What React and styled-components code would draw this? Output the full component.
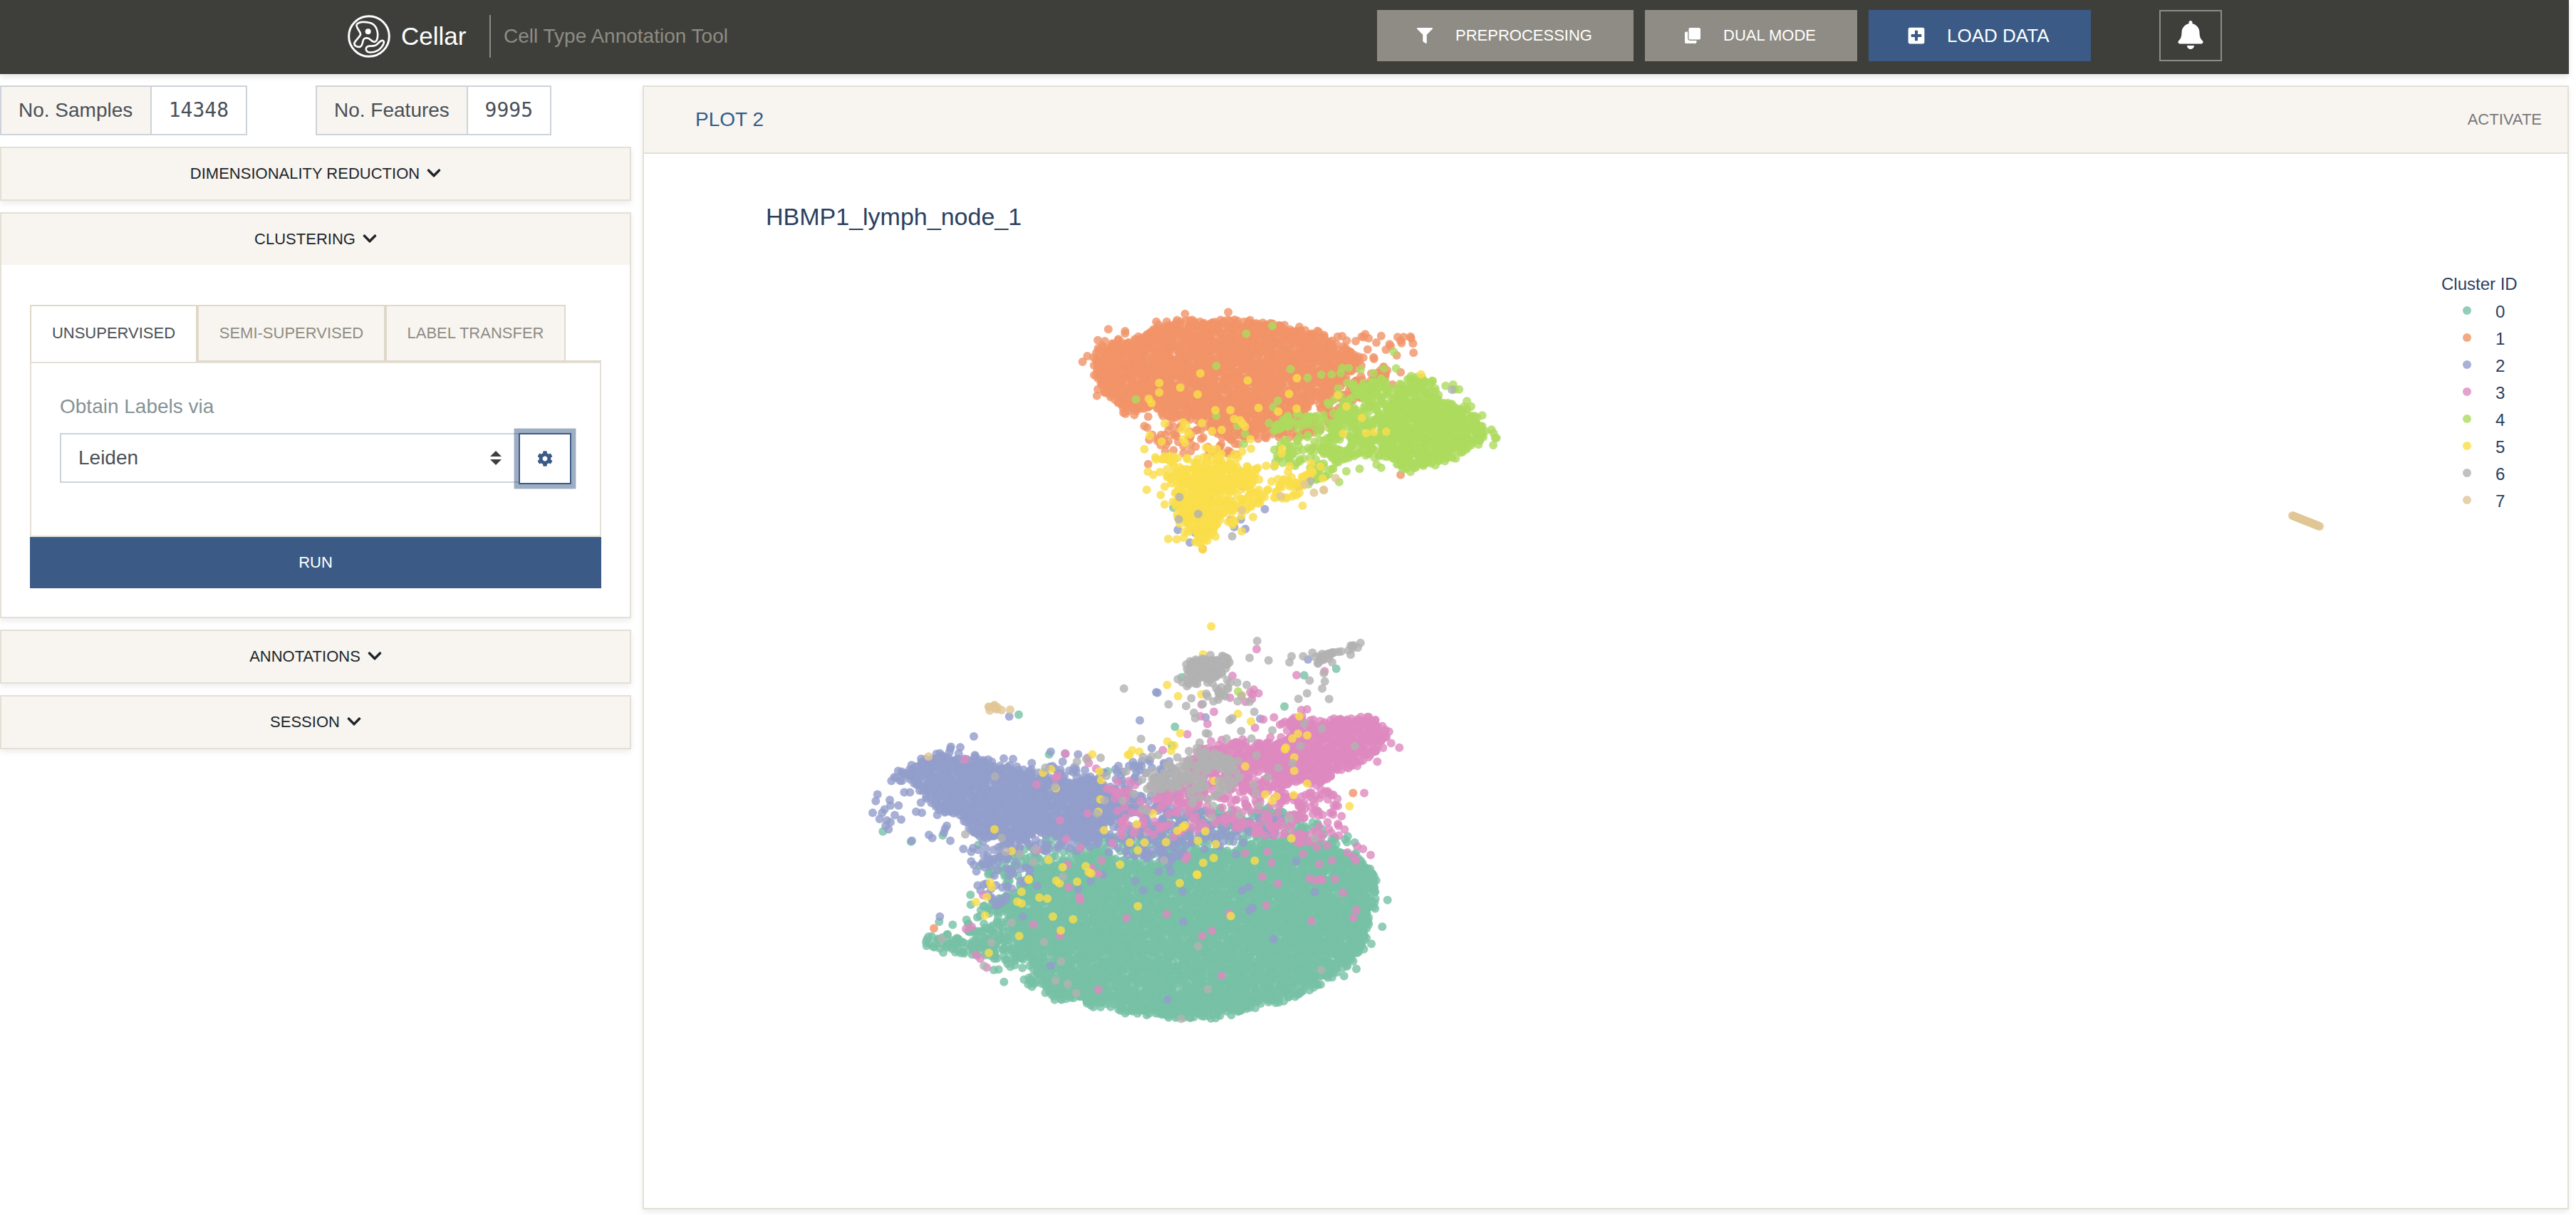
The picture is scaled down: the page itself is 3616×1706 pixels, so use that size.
import React from "react";
import styled, { createGlobalStyle } from "styled-components";
import {
  FaBell,
  FaChevronDown,
  FaClone,
  FaCog,
  FaFilter,
  FaPlusSquare,
} from "react-icons/fa";

const GlobalStyle = createGlobalStyle`
  * { box-sizing: border-box; }
  body {
    margin: 0;
    background: #fff;
    font-family: "Liberation Sans", Arial, sans-serif;
    font-size: 28px;
    line-height: 1.5;
    color: #3e3f3a;
  }
`;

/* ---------- palette ---------- */

const ink = "#212529";
const blue = "#3b5b86";
const sand = "#f8f5f0";
const cardLine = "#e4e0d6";
const tabLine = "#dfd9ca";
const inputLine = "#cdd3da";
const plotInk = "#2a3f5f";

/* ---------- page ---------- */

const Page = styled.div`
  width: 3606px;
  height: 1706px;
  overflow: visible;
`;

const Navbar = styled.header`
  display: flex;
  align-items: flex-start;
  height: 104px;
  padding: 14px 0 0 488px;
  background: #3e3f3a;
  box-shadow: 0 4px 8px rgba(0, 0, 0, 0.1);
`;

const Brand = styled.div`
  display: flex;
  align-items: center;
  width: 1445px;
  height: 60px;
  margin-top: 7px;
`;

const BrandName = styled.span`
  width: 124px;
  margin-left: 15px;
  font-size: 35px;
  line-height: 60px;
  color: #fff;
  white-space: nowrap;
`;

const Tagline = styled.span`
  height: 60px;
  padding-left: 18px;
  border-left: 2px solid #8e8c84;
  line-height: 60px;
  color: #8e8c84;
  white-space: nowrap;
`;

const NavActions = styled.div`
  display: flex;
  gap: 16px;
`;

const NavButton = styled.button`
  display: flex;
  align-items: center;
  width: ${(p) => p.$width}px;
  height: 72px;
  padding: 0 0 0 ${(p) => p.$pad}px;
  border: 0;
  background: ${(p) => (p.$primary ? blue : "#8e8c84")};
  color: #fff;
  font-family: inherit;
  font-size: ${(p) => (p.$primary ? 26 : 22)}px;
  white-space: nowrap;

  svg {
    width: ${(p) => p.$icon}px;
    height: ${(p) => p.$icon}px;
    margin-right: ${(p) => p.$gap}px;
  }
`;

const BellButton = styled.button`
  display: flex;
  align-items: center;
  justify-content: center;
  width: 88px;
  height: 72px;
  margin-left: 80px;
  padding: 0 0 3px;
  border: 2px solid #8e8c84;
  background: transparent;
  color: #fff;
`;

const Body = styled.main`
  display: flex;
  gap: 16px;
  padding-top: 16px;
`;

/* ---------- sidebar ---------- */

const Sidebar = styled.aside`
  display: flex;
  flex-direction: column;
  gap: 16px;
  width: 886px;
`;

const Stats = styled.div`
  display: flex;
  gap: 96px;
  height: 70px;
`;

const Stat = styled.div`
  display: flex;
  width: ${(p) => p.$width}px;
  border: 2px solid ${inputLine};
  line-height: 66px;
  color: #495057;
`;

const StatLabel = styled.span`
  flex: 1;
  padding-left: 24px;
  border-right: 2px solid ${inputLine};
  background: ${sand};
  white-space: nowrap;
`;

const StatValue = styled.span`
  padding: 0 24px;
  font-family: "DejaVu Sans Mono", monospace;
`;

const Panel = styled.section`
  border: 2px solid ${cardLine};
  background: #fff;
  box-shadow: 0 4px 8px rgba(0, 0, 0, 0.075);
`;

const PanelHeader = styled.div`
  display: flex;
  align-items: center;
  justify-content: center;
  gap: 10px;
  height: 72px;
  padding-bottom: 2px;
  background: ${sand};
  font-size: 22px;
  color: ${ink};

  svg {
    width: 20px;
    height: 22px;
  }
`;

const PanelBody = styled.div`
  padding: 56px 40px 40px;
`;

const Tabs = styled.div`
  display: flex;
  height: 80px;
  border-bottom: 2px solid ${tabLine};
`;

const Tab = styled.div`
  display: flex;
  align-items: center;
  justify-content: center;
  width: ${(p) => p.$width}px;
  height: ${(p) => (p.$active ? 80 : 78)}px;
  padding-bottom: ${(p) => (p.$active ? 3 : 1)}px;
  border: 2px solid ${tabLine};
  border-bottom: 0;
  background: ${(p) => (p.$active ? "#fff" : sand)};
  font-size: 22px;
  color: ${(p) => (p.$active ? "#495057" : "#8e8c84")};
  white-space: nowrap;
`;

const TabPane = styled.div`
  height: 246px;
  padding: 40px 40px 0;
  border: 2px solid ${cardLine};
`;

const FieldLabel = styled.div`
  height: 42px;
  margin-bottom: 16px;
  color: #869296;
`;

const FieldRow = styled.div`
  display: flex;
  align-items: flex-start;
`;

const Select = styled.div`
  display: flex;
  align-items: center;
  justify-content: space-between;
  width: 646px;
  height: 70px;
  padding: 0 26px 0 24px;
  border: 2px solid ${inputLine};
  border-right: 0;
  color: #495057;
`;

const GearButton = styled.button`
  display: flex;
  align-items: center;
  justify-content: center;
  width: 74px;
  height: 72px;
  margin-left: -2px;
  padding: 0;
  border: 2px solid ${blue};
  background: #fff;
  color: ${blue};
  box-shadow: 0 0 0 6.4px rgba(59, 91, 134, 0.5);
`;

const RunButton = styled.button`
  display: block;
  width: 100%;
  height: 72px;
  border: 0;
  background: ${blue};
  color: #fff;
  font-family: inherit;
  font-size: 22px;
`;

/* ---------- plot card ---------- */

const PlotCard = styled(Panel)`
  width: 2704px;
  height: 1578px;
`;

const PlotHeader = styled.div`
  display: flex;
  align-items: center;
  justify-content: space-between;
  height: 94px;
  padding: 0 36px 1px 72px;
  border-bottom: 2px solid ${cardLine};
  background: ${sand};
`;

const PlotName = styled.span`
  color: #325d88;
`;

const Activate = styled.span`
  font-size: 22px;
  color: #77777a;
`;

const Chart = styled.svg`
  display: block;
  width: 2700px;
  height: 1478px;
  font-family: "Liberation Sans", Arial, sans-serif;
`;

/* ---------- drawings ---------- */

function CellarLogo() {
  return (
    <svg width="60" height="60" viewBox="12 9 180 180" fill="none" stroke="#fff">
      <circle cx="102" cy="99" r="85" strokeWidth="9" />
      <path
        strokeWidth="8"
        strokeLinejoin="round"
        d="M60 42C72 36 110 38 124 52C140 68 142 100 134 116C128 127 117 122 109 114C98 104 84 104 79 112C74 120 76 140 64 143C50 146 37 136 41 126C46 114 61 104 66 92C69 80 45 62 50 50C52 44 56 43 60 42Z"
      />
      <circle cx="98" cy="79" r="12" fill="#fff" stroke="none" />
      <path
        strokeWidth="8"
        strokeLinejoin="round"
        d="M98 141C110 137 124 146 138 131C147 120 158 112 164 120C168 130 152 152 136 160C120 168 96 170 91 159C87 150 90 144 98 141Z"
      />
    </svg>
  );
}

function SelectArrows() {
  return (
    <svg width="16" height="20" viewBox="0 0 16 20" fill="#3e3f3a">
      <path d="M8 0l8 8H0zM8 20l8-8H0z" />
    </svg>
  );
}

/* ---------- scatter data ---------- */

const MARK = ["#77c1a6", "#f19468", "#929dcb", "#dd8abf", "#addb5e", "#fadd4a", "#b2b2b2", "#e1c596"];

const UPPER = [1480, 400, 2.376, 3];
const LOWER = [1200, 840, 3, 2.613];

const place = ([x0, y0, sx, sy], flat) => {
  const out = [];
  for (let i = 0; i < flat.length; i += 2) {
    out.push([x0 + flat[i] / sx, y0 + flat[i + 1] / sy]);
  }
  return out;
};

let seed = 20417;
const rand = () => {
  seed = (seed + 0x6d2b79f5) | 0;
  let t = Math.imul(seed ^ (seed >>> 15), 1 | seed);
  t = (t + Math.imul(t ^ (t >>> 7), 61 | t)) ^ t;
  return ((t ^ (t >>> 14)) >>> 0) / 4294967296;
};

const inside = (poly, x, y) => {
  let hit = false;
  for (let i = 0, j = poly.length - 1; i < poly.length; j = i++) {
    const [xi, yi] = poly[i];
    const [xj, yj] = poly[j];
    if (yi > y !== yj > y && x < ((xj - xi) * (y - yi)) / (yj - yi) + xi) hit = !hit;
  }
  return hit;
};

const bounds = (poly) => {
  const xs = poly.map((p) => p[0]);
  const ys = poly.map((p) => p[1]);
  return [Math.min(...xs), Math.min(...ys), Math.max(...xs), Math.max(...ys)];
};

const dense = (frame, flat, step = 4.8) => {
  const poly = place(frame, flat);
  const [x1, y1, x2, y2] = bounds(poly);
  const out = [];
  for (let y = y1; y <= y2; y += step) {
    for (let x = x1; x <= x2; x += step) {
      if (inside(poly, x, y)) {
        out.push([x + (rand() - 0.5) * step * 1.6, y + (rand() - 0.5) * step * 1.6]);
      }
    }
  }
  return out;
};

const sparse = (frame, flat, count) => {
  const poly = place(frame, flat);
  const [x1, y1, x2, y2] = bounds(poly);
  const out = [];
  while (out.length < count) {
    const x = x1 + rand() * (x2 - x1);
    const y = y1 + rand() * (y2 - y1);
    if (inside(poly, x, y)) out.push([x, y]);
  }
  return out;
};

const CLUSTERS = [
  // 0
  [
    ...dense(LOWER, [760,1370, 700,1300, 690,1230, 640,1150, 700,1050, 780,990, 900,970, 1000,920, 1060,930, 1100,980, 1250,970, 1400,940, 1500,920, 1620,930, 1700,900, 1800,880, 2000,900, 2060,930, 2130,960, 2195,1010, 2205,1060, 2190,1110, 2170,1200, 2150,1270, 2090,1340, 2020,1375, 1960,1420, 1860,1455, 1780,1490, 1700,1480, 1650,1515, 1560,1530, 1400,1545, 1250,1530, 1180,1530, 1120,1520, 1080,1490, 980,1500, 930,1460, 880,1480, 820,1465, 790,1430, 700,1410]),
    ...dense(LOWER, [298,1275, 320,1242, 400,1230, 480,1250, 560,1250, 590,1270, 560,1315, 470,1318, 400,1295], 5.6),
    ...sparse(LOWER, [450,1200, 500,1190, 540,1130, 640,1080, 720,1100, 760,1340, 720,1360, 640,1345, 560,1320], 200),
    ...sparse(LOWER, [500,990, 600,950, 800,880, 1000,870, 1200,850, 1400,780, 1700,750, 2080,850, 2140,950, 1600,980, 1000,990, 700,1090, 540,1010], 480),
    ...place(LOWER, [302,1275, 300,1262, 310,1242, 335,1280, 372,1300, 690,427, 118,856, 236,893, 818,573, 487,1088, 488,1124, 355,1187, 412,1198, 470,1180, 628,1408, 605,1362, 585,1364, 655,1352, 2243,1107, 2221,1205, 2112,1360, 2060,1386, 2175,1268, 2170,993, 1348,472, 1809,397, 1892,283, 2027,259, 1376,290, 1880,770, 1065,635, 520,905, 370,870, 2110,935, 2130,963, 1335,540]),
    ...place(UPPER, [397,938]),
  ],
  // 1
  [
    ...dense(UPPER, [130,360, 128,300, 165,240, 210,225, 260,238, 300,190, 400,155, 500,143, 620,145, 720,160, 800,180, 880,200, 930,240, 985,270, 1030,300, 1020,345, 960,400, 940,450, 860,490, 830,540, 740,560, 700,610, 640,630, 600,600, 520,590, 470,570, 380,560, 320,520, 270,548, 235,540, 205,490, 160,450, 130,380]),
    ...sparse(UPPER, [500,590, 600,600, 760,560, 860,500, 960,400, 1100,345, 1110,400, 1000,500, 900,620, 780,650, 640,650, 520,640], 190),
    ...sparse(UPPER, [295,570, 350,580, 440,590, 560,620, 640,650, 620,720, 520,730, 430,710, 380,710, 300,650], 60),
    ...place(UPPER, [436,122, 580,115, 340,155, 375,155, 180,187, 236,195, 236,205, 145,233, 110,300, 94,324, 142,467, 145,440, 945,218, 960,216, 975,235, 1005,237, 1025,218, 1037,208, 1032,220, 1048,225, 1090,215, 1074,243, 1045,272, 1065,305, 1066,312, 1118,250, 1122,258, 1106,273, 1145,220, 1155,235, 1165,220, 1188,218, 1190,225, 1196,247, 1198,286, 1142,297, 1158,245, 1098,345, 1110,360, 1128,420, 1155,368, 1155,800, 1070,570, 860,690, 815,850, 313,755, 552,750, 313,555, 300,595, 585,710, 630,850, 495,1112]),
    ...place(LOWER, [333,1211, 2098,715]),
  ],
  // 2
  [
    ...dense(LOWER, [120,675, 160,655, 190,630, 240,610, 330,573, 400,573, 440,590, 540,580, 600,610, 700,625, 760,635, 830,650, 900,665, 1000,650, 1060,690, 1180,720, 1180,790, 1050,830, 1000,890, 850,875, 780,850, 700,890, 600,885, 500,870, 460,810, 410,795, 350,780, 280,710, 240,670, 180,660]),
    ...sparse(LOWER, [750,600, 950,620, 1000,640, 1300,570, 1350,620, 1500,800, 1800,800, 1780,870, 1300,960, 1000,930, 700,930, 560,990, 480,980, 500,870, 1050,830], 370),
    ...sparse(LOWER, [480,950, 640,930, 760,1000, 620,1130, 540,1120], 45),
    ...sparse(LOWER, [1150,760, 1350,780, 1400,900, 1330,1000, 1200,940], 50),
    ...place(LOWER, [95,720, 88,744, 75,787, 147,740, 150,760, 184,760, 125,775, 115,787, 168,796, 104,810, 135,815, 150,822, 195,812, 130,835, 142,848, 208,712, 232,712, 278,750, 258,783, 282,787, 347,795, 312,868, 326,880, 240,890, 375,860, 380,845, 387,835, 402,890, 457,920, 490,930, 501,507, 404,545, 402,552, 444,547, 437,570, 627,588, 666,590, 745,605, 650,434, 1200,448, 1269,345, 1274,347, 1250,550, 885,570, 940,573, 825,563, 875,600, 930,625, 358,1168, 560,955, 707,1168, 767,1055, 825,1348, 993,1038, 1045,1014, 940,1068, 1181,1038, 1215,1072, 1317,1473, 1383,1187, 1281,1063, 1380,1075, 1630,1072, 1658,1060, 1660,1145, 1675,1137, 1937,1078, 1763,1250, 1858,965, 1605,940, 1330,1005, 1280,1003, 1477,437, 1707,442, 1908,225, 1110,615, 1155,615]),
    ...place(UPPER, [412,1032, 480,1030, 490,1030, 500,1040, 470,1045, 622,988, 637,1028, 702,945, 600,1020, 452,1085]),
  ],
  // 3
  [
    ...dense(LOWER, [1790,450, 1850,440, 1900,443, 1960,450, 2020,432, 2100,440, 2170,430, 2240,480, 2260,500, 2200,560, 2160,590, 2100,625, 2030,640, 1980,675, 1900,680, 1810,680, 1760,640, 1680,600, 1690,560, 1780,520, 1830,500]),
    ...sparse(LOWER, [1380,620, 1450,540, 1640,520, 1750,520, 1830,640, 1980,650, 2030,690, 2050,800, 2090,860, 1960,920, 1820,890, 1600,860, 1500,820, 1400,720], 330),
    ...sparse(LOWER, [1440,540, 1750,530, 1830,690, 1700,720, 1500,660], 190),
    ...sparse(LOWER, [1050,690, 1400,680, 1500,850, 1350,890, 1100,850], 60),
    ...sparse(LOWER, [1380,640, 1500,640, 1450,780, 1250,740], 60),
    ...place(LOWER, [463,591, 887,571, 980,585, 985,605, 1016,625, 855,652, 845,660, 765,683, 864,815, 890,884, 950,916, 980,789, 895,977, 900,1060, 945,1097, 950,1108, 1038,962, 1025,1012, 1000,990, 1085,898, 1144,1174, 1025,1436, 752,1197, 864,1238, 492,1205, 468,1213, 510,1308, 528,1322, 555,1355, 540,1090, 768,925, 1155,670, 1180,685, 1106,672, 1080,700, 1095,710, 1110,710, 1095,735, 1125,825, 1130,840, 1145,830, 1125,870, 1313,1159, 1463,1240, 1504,1220, 1545,1385, 1576,1157, 1732,1127, 1782,1047, 1716,1021, 1755,970, 1644,935, 1738,930, 1402,945, 1392,958, 1955,976, 2010,962, 1915,1028, 1938,1036, 1960,1030, 1968,1035, 2022,1031, 2055,1080, 2112,1144, 2100,1172, 1923,1184, 1887,938, 2075,933, 2100,950, 2110,962, 2115,910, 2140,920, 2172,942, 2145,715, 2293,548, 2200,600, 2258,532, 1692,187, 1590,285, 1860,282, 1978,268, 1512,417, 1455,433, 1485,461, 1460,390, 1580,365, 1400,499, 1297,557, 1685,475, 1720,445, 1680,335, 1665,345, 1675,352, 1700,349, 1645,380, 1672,370, 1880,410, 1904,408, 1750,510, 1765,437, 1500,525, 1545,520, 1610,530, 1633,518]),
    ...place(UPPER, [588,990]),
  ],
  // 4
  [
    ...dense(UPPER, [1180,385, 1210,375, 1250,400, 1270,450, 1290,490, 1360,510, 1410,560, 1435,600, 1435,640, 1380,695, 1300,740, 1220,775, 1160,785, 1120,740, 1100,690, 1090,620, 1080,560, 1110,500, 1145,430]),
    ...sparse(UPPER, [1000,430, 1100,390, 1140,500, 1120,720, 1000,740, 930,760, 880,700, 930,560], 260),
    ...sparse(UPPER, [920,440, 1100,350, 1100,450, 1000,700, 900,820, 840,810, 800,760, 760,700, 820,600, 830,560, 900,500], 100),
    ...sparse(UPPER, [740,660, 820,640, 850,740, 740,770, 715,750], 22),
    ...sparse(UPPER, [680,610, 760,540, 900,540, 900,600, 760,620], 34),
    ...sparse(UPPER, [850,800, 880,770, 920,800, 880,830], 14),
    ...place(UPPER, [727,173, 640,206, 540,341, 788,355, 845,392, 272,482, 540,552, 610,594, 632,670, 636,628, 1132,282, 1140,352, 1100,352, 1376,490, 1390,512, 1427,550, 1458,610, 1465,625, 1470,645, 1464,675, 1475,645, 1262,405, 1305,425, 1330,420, 1350,440, 1335,440, 1090,770, 1075,757, 1018,775, 974,785, 930,775, 798,840, 848,840, 950,830, 890,378, 925,377, 955,372, 982,350, 1022,357, 1065,372, 960,350, 745,488, 730,515]),
    ...place(LOWER, [1614,342]),
  ],
  // 5
  [
    ...dense(UPPER, [430,770, 500,785, 560,750, 620,770, 690,770, 690,800, 650,850, 580,870, 590,905, 680,910, 670,930, 600,955, 540,990, 500,1000, 430,1010, 415,960, 410,900, 400,840], 5.6),
    ...sparse(UPPER, [490,680, 550,670, 560,720, 640,690, 640,740, 700,740, 720,800, 740,900, 680,930, 600,1010, 530,1070, 500,1100, 430,1080, 410,1040, 380,850, 330,770, 320,720, 400,700, 450,730], 210),
    ...sparse(UPPER, [720,820, 780,780, 870,780, 840,840, 800,905, 740,900], 40),
    ...sparse(UPPER, [440,990, 540,990, 530,1085, 430,1085], 30),
    ...place(UPPER, [487,373, 350,413, 350,453, 420,433, 478,461, 645,403, 809,393, 783,459, 946,464, 974,512, 1026,560, 963,626, 1040,625, 1066,620, 1107,618, 1223,377, 315,480, 324,498, 537,528, 587,528, 681,518, 747,534, 808,521, 368,584, 492,582, 526,616, 558,611, 430,580, 440,590, 425,610, 445,620, 452,630, 430,650, 436,665, 600,565, 620,570, 628,585, 636,597, 318,635, 358,660, 300,692, 654,650, 656,690, 308,863, 368,850, 355,885, 368,925, 828,930, 663,978, 625,1038, 595,1010, 380,1070, 408,1072, 760,690, 758,710, 735,762, 784,765, 856,750, 888,765, 895,815, 330,800, 312,787, 495,1115, 490,1095]),
    ...place(LOWER, [1000,573, 826,627, 792,640, 1030,635, 1037,667, 846,697, 1034,738, 1025,784, 588,848, 1050,851, 1158,896, 1187,829, 1220,896, 1192,925, 1117,977, 660,928, 815,960, 875,987, 972,983, 985,1005, 995,1010, 936,1040, 862,1046, 848,1036, 732,1031, 732,1033, 702,1077, 777,1098, 811,1102, 684,1113, 702,1120, 570,1043, 576,1060, 556,1096, 510,1115, 548,1164, 834,1168, 919,1178, 867,1219, 692,1239, 564,1301, 1192,1130, 1150,574, 1168,558, 1198,563, 1157,575, 1501,103, 1466,206, 1315,318, 1361,359, 1459,353, 1630,355, 1613,424, 1668,452, 1370,495, 1316,525, 1345,540, 1332,560, 1872,433, 1866,497, 1842,515, 1905,503, 1815,548, 1811,554, 1850,584, 1850,633, 1905,680, 1644,617, 1728,720, 1775,727, 1757,743, 1848,722, 1513,670, 2083,763, 1390,833, 1380,840, 1358,853, 1476,855, 1445,890, 1520,902, 1310,895, 1838,881, 1684,963, 1511,953, 1467,971, 1440,1013, 1442,1015, 1368,1045, 1583,1166, 1255,790, 1570,230]),
  ],
  // 6
  [
    ...dense(LOWER, [1390,300, 1395,250, 1410,232, 1500,215, 1540,205, 1570,225, 1540,255, 1530,290, 1500,305, 1440,308, 1390,325], 5.6),
    ...sparse(LOWER, [1370,330, 1390,230, 1600,195, 1560,270, 1590,300, 1570,365, 1530,365, 1500,310], 60),
    ...dense(LOWER, [1930,225, 1960,205, 2000,190, 2060,190, 2105,168, 2128,168, 2100,188, 2030,208, 1960,238], 4),
    ...dense(LOWER, [1225,705, 1260,660, 1340,635, 1400,605, 1480,580, 1560,570, 1580,600, 1550,625, 1470,640, 1400,685, 1330,700], 6.4),
    ...sparse(LOWER, [1220,640, 1440,540, 1600,600, 1620,680, 1560,720, 1480,750, 1380,760, 1330,700, 1230,720], 90),
    ...place(LOWER, [1133,331, 1205,516, 1214,583, 1250,580, 1278,575, 935,600, 975,590, 1035,585, 802,622, 590,654, 1060,652, 1143,635, 843,692, 1052,742, 1020,790, 1128,743, 1175,718, 1210,665, 1210,775, 1230,780, 465,866, 618,880, 635,930, 693,938, 758,922, 752,967, 877,1022, 660,1190, 575,1263, 797,1261, 868,1333, 845,1403, 896,1415, 932,1449, 366,1249, 543,1348, 1374,1543, 1445,1277, 1487,1434, 1964,1364, 1302,962, 1694,157, 1662,219, 1742,228, 1839,213, 1830,235, 1888,213, 1927,200, 1915,302, 1979,305, 1968,331, 1904,349, 1868,369, 1997,370, 2088,207, 1975,275, 1950,240, 2010,235, 1321,389, 1395,395, 1417,367, 1428,420, 1433,440, 1480,350, 1485,360, 1510,378, 1530,372, 1555,355, 1560,360, 1465,388, 1610,310, 1650,318, 1628,358, 1612,378, 1662,380, 1578,447, 1589,440, 1682,417, 1478,495, 1488,497, 1627,487, 1670,515, 1565,515, 1758,485, 1893,460, 1967,478, 2105,542, 1877,543, 1843,605, 1783,622, 1691,576, 1740,655, 1680,685, 1690,715, 1620,657, 1613,597, 1508,762, 1705,760, 1832,805, 1937,882, 1620,795, 1502,805, 1360,297, 1452,530, 1440,550]),
    ...place(UPPER, [417,894, 480,965, 415,988, 593,1059, 854,827, 1326,442]),
  ],
  // 7
  [
    ...Array.from({ length: 26 }, (_, i) => [3218 + i * 1.52, 724 + i * 0.6]),
    ...place(LOWER, [563,398, 568,400, 585,395, 588,392, 592,405, 600,400, 598,408, 618,410, 568,412, 654,409, 310,581]),
    ...place(UPPER, [938,814, 866,875, 898,863, 899,865, 755,890, 835,840, 625,950]),
  ],
];

function ScatterPlot() {
  return (
    <Chart viewBox="904 216 2700 1478" fill={plotInk}>
      <text x="1075" y="316" fontSize="34">
        HBMP1_lymph_node_1
      </text>
      {CLUSTERS.map((points, id) => (
        <g key={id} fill={MARK[id]} fillOpacity="0.8">
          {points.map(([x, y], i) => (
            <circle key={i} cx={x.toFixed(1)} cy={y.toFixed(1)} r="6" />
          ))}
        </g>
      ))}
      <text x="3427" y="407" fontSize="24">
        Cluster ID
      </text>
      {MARK.map((color, id) => (
        <g key={id}>
          <circle cx="3463" cy={436 + id * 38} r="6" fill={color} fillOpacity="0.8" />
          <text x="3503" y={446 + id * 38} fontSize="24">
            {id}
          </text>
        </g>
      ))}
    </Chart>
  );
}

/* ---------- app ---------- */

function SectionHeader({ children }) {
  return (
    <PanelHeader>
      <span>{children}</span>
      <FaChevronDown />
    </PanelHeader>
  );
}

export default function App() {
  return (
    <>
      <GlobalStyle />
      <Page>
        <Navbar>
          <Brand>
            <CellarLogo />
            <BrandName>Cellar</BrandName>
            <Tagline>Cell Type Annotation Tool</Tagline>
          </Brand>
          <NavActions>
            <NavButton $width={360} $pad={56} $icon={22} $gap={32}>
              <FaFilter />
              PREPROCESSING
            </NavButton>
            <NavButton $width={298} $pad={56} $icon={22} $gap={32}>
              <FaClone />
              DUAL MODE
            </NavButton>
            <NavButton $primary $width={312} $pad={54} $icon={26} $gap={30}>
              <FaPlusSquare />
              LOAD DATA
            </NavButton>
            <BellButton>
              <FaBell size={40} />
            </BellButton>
          </NavActions>
        </Navbar>
        <Body>
          <Sidebar>
            <Stats>
              <Stat $width={347}>
                <StatLabel>No. Samples</StatLabel>
                <StatValue>14348</StatValue>
              </Stat>
              <Stat $width={331}>
                <StatLabel>No. Features</StatLabel>
                <StatValue>9995</StatValue>
              </Stat>
            </Stats>
            <Panel>
              <SectionHeader>DIMENSIONALITY REDUCTION</SectionHeader>
            </Panel>
            <Panel>
              <SectionHeader>CLUSTERING</SectionHeader>
              <PanelBody>
                <Tabs>
                  <Tab $active $width={235}>UNSUPERVISED</Tab>
                  <Tab $width={264}>SEMI-SUPERVISED</Tab>
                  <Tab $width={253}>LABEL TRANSFER</Tab>
                </Tabs>
                <TabPane>
                  <FieldLabel>Obtain Labels via</FieldLabel>
                  <FieldRow>
                    <Select>
                      Leiden
                      <SelectArrows />
                    </Select>
                    <GearButton>
                      <FaCog size={22} />
                    </GearButton>
                  </FieldRow>
                </TabPane>
                <RunButton>RUN</RunButton>
              </PanelBody>
            </Panel>
            <Panel>
              <SectionHeader>ANNOTATIONS</SectionHeader>
            </Panel>
            <Panel>
              <SectionHeader>SESSION</SectionHeader>
            </Panel>
          </Sidebar>
          <PlotCard>
            <PlotHeader>
              <PlotName>PLOT 2</PlotName>
              <Activate>ACTIVATE</Activate>
            </PlotHeader>
            <ScatterPlot />
          </PlotCard>
        </Body>
      </Page>
    </>
  );
}
